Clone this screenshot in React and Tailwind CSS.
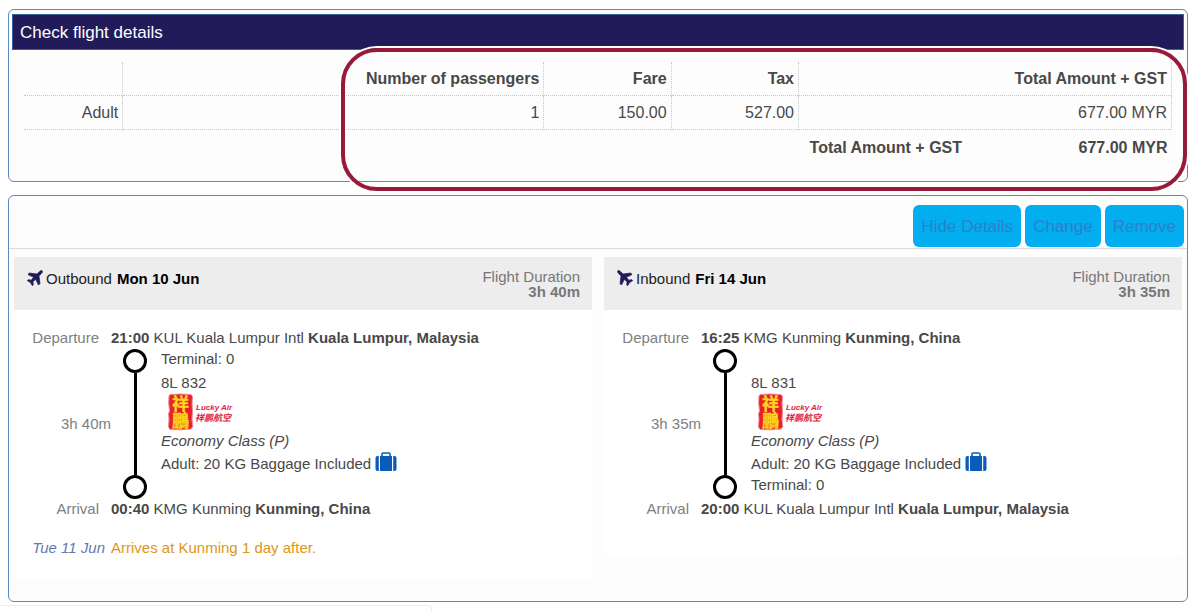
import React from "react";

const fares = [
  { type: "Adult", count: 1, fare: "150.00", tax: "527.00", total: "677.00 MYR" },
];

const flights = [
  {
    direction: "Outbound",
    date: "Mon 10 Jun",
    duration: "3h 40m",
    number: "8L 832",
    iconClass: "rotate-45",
    departure: { time: "21:00", airport: "KUL Kuala Lumpur Intl", city: "Kuala Lumpur, Malaysia", terminal: "Terminal: 0" },
    arrival: { time: "00:40", airport: "KMG Kunming", city: "Kunming, China", terminal: "" },
    notice: { date: "Tue 11 Jun", text: "Arrives at Kunming 1 day after." },
  },
  {
    direction: "Inbound",
    date: "Fri 14 Jun",
    duration: "3h 35m",
    number: "8L 831",
    iconClass: "-rotate-45",
    departure: { time: "16:25", airport: "KMG Kunming", city: "Kunming, China", terminal: "" },
    arrival: { time: "20:00", airport: "KUL Kuala Lumpur Intl", city: "Kuala Lumpur, Malaysia", terminal: "Terminal: 0" },
    notice: null,
  },
];

const App = () => (
  <div className="bg-white pl-2 pr-3 pt-[9px] font-['Liberation_Sans',Arial,sans-serif] text-[15px] leading-5 text-[#484848]">
    <FareSummary />
    <Itinerary />
    <div className="-ml-2 mt-[3px] h-[7px] w-[36.6%] rounded-tr border-t border-r border-[#ececf2]" />
  </div>
);

const FareSummary = () => (
  <section className="relative rounded-md border border-[#5f88bd] bg-[#fdfdfd] px-[3px] pt-1 pb-[17px]">
    <h2 className="border border-[#3b5f9c] bg-[#211b5a] px-[7px] pt-[6px] pb-1 text-[17px] leading-6 text-white">
      Check flight details
    </h2>
    <div className="px-3 pt-3">
      <table className="w-full table-fixed text-right text-base leading-6">
        <colgroup>
          <col className="w-[8.6%]" />
          <col className="w-[36.7%]" />
          <col className="w-[11.1%]" />
          <col className="w-[11.1%]" />
          <col className="w-[14.6%]" />
          <col />
        </colgroup>
        <thead>
          <tr className="border-b border-dotted border-[#c8c8c8]">
            <th className="border-r border-dotted border-[#c8c8c8]"></th>
            <HeadCell>Number of passengers</HeadCell>
            <HeadCell>Fare</HeadCell>
            <HeadCell>Tax</HeadCell>
            <HeadCell colSpan={2}>Total Amount + GST</HeadCell>
          </tr>
        </thead>
        <tbody>
          {fares.map((row) => (
            <tr key={row.type} className="border-b border-dotted border-[#c8c8c8]">
              <Cell>{row.type}</Cell>
              <Cell>{row.count}</Cell>
              <Cell>{row.fare}</Cell>
              <Cell>{row.tax}</Cell>
              <Cell colSpan={2}>{row.total}</Cell>
            </tr>
          ))}
        </tbody>
        <tfoot>
          <tr className="font-bold">
            <td colSpan={4}></td>
            <td className="px-1 pt-[6px] pb-1">Total Amount + GST</td>
            <td className="px-1 pt-[6px] pb-1">677.00 MYR</td>
          </tr>
        </tfoot>
      </table>
    </div>
    {/* highlight around the totals */}
    <div className="pointer-events-none absolute top-[38px] right-0 -bottom-[10px] left-[28.2%] rounded-[36px] border-4 border-[#981a3a] ring-2 ring-white" />
  </section>
);

const HeadCell = ({ children, colSpan }) => (
  <th colSpan={colSpan} className="border-r border-dotted border-[#c8c8c8] px-1 pt-[5px] pb-1 font-bold">
    {children}
  </th>
);

const Cell = ({ children, colSpan }) => (
  <td colSpan={colSpan} className="border-r border-dotted border-[#c8c8c8] px-1 pt-[5px] pb-1">
    {children}
  </td>
);

const Itinerary = () => (
  <section className="mt-[13px] rounded-md border border-[#5f88bd] bg-[#fdfdfd] pb-[23px]">
    <div className="flex justify-end gap-1 border-b border-[#dcdcdc] px-[3px] pt-[9px] pb-px">
      <ActionButton>Hide Details</ActionButton>
      <ActionButton>Change</ActionButton>
      <ActionButton>Remove</ActionButton>
    </div>
    <div className="grid grid-cols-2 items-start gap-3 px-[5px] pt-2">
      {flights.map((flight) => (
        <FlightCard key={flight.number} flight={flight} />
      ))}
    </div>
  </section>
);

const ActionButton = ({ children }) => (
  <button type="button" className="rounded-md bg-[#02adf0] px-2 pt-[10px] pb-2 text-[17px] leading-6 text-[#2c80c8]">
    {children}
  </button>
);

const FlightCard = ({ flight }) => (
  <article className={flight.notice ? "bg-white pb-5" : "bg-white pb-[37px]"}>
    <header className="flex justify-between bg-[#ededed] px-3 pt-3 pb-[11px]">
      <div className="flex h-5 items-center">
        <PlaneIcon className={flight.iconClass} />
        <span className="text-[#222222]">{flight.direction}</span>
        <strong className="ml-[5px] text-black">{flight.date}</strong>
      </div>
      <div className="text-right leading-[15px] text-[#777777]">
        <div>Flight Duration</div>
        <strong>{flight.duration}</strong>
      </div>
    </header>

    <div className="pt-[18px]">
      <Stop label="Departure" stop={flight.departure} />
      <div className="flex pt-px">
        <div className="flex w-[97px] items-center justify-end text-[#808080]">{flight.duration}</div>
        <div className="ml-3 flex w-6 flex-col items-center">
          <span className="size-6 rounded-full border-3 border-black" />
          <span className="w-[3px] flex-1 bg-black" />
          <span className="size-6 rounded-full border-3 border-black" />
        </div>
        <div className="ml-[14px] pb-1">
          <p className="h-5">{flight.departure.terminal}</p>
          <p className="mt-1">{flight.number}</p>
          <LuckyAirLogo />
          <p className="italic">Economy Class (P)</p>
          <p className="mt-[3px] flex">
            Adult: 20 KG Baggage Included
            <Suitcase />
          </p>
          <p className="mt-px h-5">{flight.arrival.terminal}</p>
        </div>
      </div>
      <Stop label="Arrival" stop={flight.arrival} />
      {flight.notice && (
        <div className="mt-[19px] flex gap-[6px]">
          <em className="w-[91px] text-right text-[#6678b0]">{flight.notice.date}</em>
          <span className="text-[#dd9618]">{flight.notice.text}</span>
        </div>
      )}
    </div>
  </article>
);

const Stop = ({ label, stop }) => (
  <div className="flex gap-3">
    <span className="w-[85px] text-right text-[#808080]">{label}</span>
    <p>
      <strong>{stop.time}</strong> {stop.airport} <strong>{stop.city}</strong>
    </p>
  </div>
);

const PlaneIcon = ({ className }) => (
  <svg
    aria-hidden="true"
    width="18"
    height="18"
    viewBox="0 1.500 20 20"
    className={`mr-[2px] self-start overflow-visible ${className}`}
  >
    <path
      d="M10 .3c.9 0 1.500 1.100 1.500 2.500v4l6.800 5.200v2.300L11.600 12l-.3 4.200 2.700 1.900v1.500l-4-.9-4 .9v-1.500l2.700-1.900L8.400 12l-6.700 2.300V12l6.800-5.200v-4C8.500 1.400 9.100.3 10 .3z"
      fill="#211b5a"
      stroke="#211b5a"
      strokeWidth=".8"
      strokeLinejoin="round"
    />
  </svg>
);

const LuckyAirLogo = () => (
  <svg role="img" aria-label="Lucky Air" width="76" height="38" viewBox="0 0 76 38" className="block">
    <path
      d="M9 1.500 19 1l11 .5 1.500 2-.5 7 .5 8-.5 8 .8 7-1.800 2.500-10 .8-11-.3L7.500 34l.5-8-.5-5 1-3-.8-8 .3-7z"
      fill="#e8202c"
      stroke="#f58a93"
      strokeWidth="1"
    />
    <text
      x="19.500"
      y="2"
      className="[writing-mode:vertical-rl]"
      fill="#ffd61f"
      stroke="#ffd61f"
      strokeWidth=".3"
      fontFamily="'Noto Sans CJK TC', sans-serif"
      fontWeight="700"
      fontSize="17"
    >
      祥鵬
    </text>
    <g fill="#e0233f" fontStyle="italic" fontWeight="700">
      <text x="35" y="17" fontFamily="'Liberation Sans', Arial, sans-serif" fontSize="8">Lucky Air</text>
      <text x="34" y="28" fontFamily="'Noto Sans CJK SC', sans-serif" fontSize="9">祥鹏航空</text>
    </g>
  </svg>
);

const Suitcase = () => (
  <svg aria-hidden="true" width="22" height="20" viewBox="0 0 22 20" className="ml-1 -mt-[2px]">
    <path d="M7 5V2q0-1 1-1h6q1 0 1 1v3" fill="none" stroke="#0b5cb8" strokeWidth="1.600" />
    <path d="M5 4h12v15H5zM3.800 4v15H2.500Q.5 19 .5 17V6q0-2 2-2zM18.200 4v15h1.300q2 0 2-2V6q0-2-2-2z" fill="#0b5cb8" />
  </svg>
);

export default App;
